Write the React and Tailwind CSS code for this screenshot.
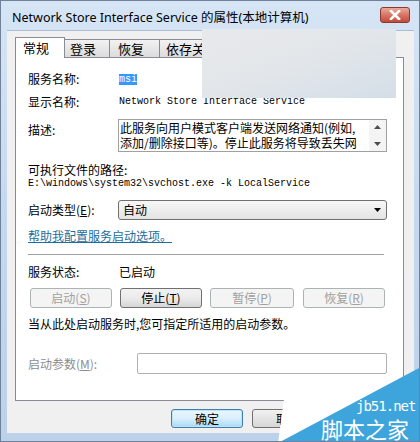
import React from "react";

const cjk = "font-['Noto_Sans_CJK_SC','Noto_Sans',sans-serif]";
const mono = "font-['Liberation_Mono',monospace]";

function Btn({ children, disabled, w = "w-[82px]" }) {
  return (
    <div
      className={`${w} h-[20px] flex items-center justify-center rounded-[3px] border text-[12px] leading-[16px] ${
        disabled
          ? "border-[#adb2b5] bg-[#f4f4f4] text-[#a0a0a0]"
          : "border-[#707070] bg-gradient-to-b from-[#f2f2f2] via-[#ebebeb] to-[#d6d6d6] text-black"
      }`}
    >
      {children}
    </div>
  );
}

export default function App() {
  return (
    <div
      className={`relative w-[420px] h-[442px] overflow-hidden flex flex-col bg-gradient-to-b from-[#d6e5f5] via-[#c4d8ee] to-[#bcd2ea] border border-[#6f8299] ${cjk}`}
    >
      {/* title bar */}
      <div className="h-[29px] shrink-0 flex items-center pl-[11px] pr-[9px]">
        <div className="text-[12.5px] leading-[16px] text-black pt-[4px] font-['Noto_Sans','Noto_Sans_CJK_SC',sans-serif]">
          Network Store Interface Service 的属性(本地计算机)
        </div>
        <div className="ml-auto mt-[-2px] w-[30px] h-[16px] rounded-[3px] border border-[#8b3a32] bg-gradient-to-b from-[#e9a99c] via-[#d77565] to-[#c2493a] flex items-center justify-center">
          <svg width="12" height="10" viewBox="0 0 12 10">
            <path d="M2 1 L10 9 M10 1 L2 9" stroke="#fff" strokeWidth="2.6" strokeLinecap="square" />
          </svg>
        </div>
      </div>

      {/* dialog body */}
      <div className="flex-1 ml-[6px] mr-[5px] mb-[8px] bg-[#f0f0f0] flex flex-col border-t border-[#a8bcd4]">
        {/* tabs */}
        <div className="h-[26px] flex items-end pl-[8px] shrink-0">
          <div className="w-[50px] h-[21px] bg-white border border-b-0 border-[#898c95] text-[13px] leading-[16px] pl-[7px] pt-[2px] relative z-10 mb-[-1px]">
            常规
          </div>
          <div className="w-[45px] h-[18px] bg-gradient-to-b from-[#f2f2f2] to-[#dcdcdc] border border-l-0 border-b-0 border-[#898c95] text-[13px] leading-[16px] pl-[5px] pt-[1px]">
            登录
          </div>
          <div className="w-[50px] h-[18px] bg-gradient-to-b from-[#f2f2f2] to-[#dcdcdc] border border-l-0 border-b-0 border-[#898c95] text-[13px] leading-[16px] pl-[8px] pt-[1px]">
            恢复
          </div>
          <div className="w-[50px] h-[18px] bg-gradient-to-b from-[#f2f2f2] to-[#dcdcdc] border border-l-0 border-b-0 border-[#898c95] text-[13px] leading-[16px] pl-[6px] pt-[1px]">
            依存关系
          </div>
        </div>

        {/* panel */}
        <div className="ml-[8px] mr-[10px] h-[344px] bg-white border border-[#898c95] flex flex-col pl-[12px] pr-[16px] text-[12px] leading-[16px] text-black">
          <div className="mt-[13px] h-[16px] flex items-center">
            <div className="w-[91px]">服务名称:</div>
            <span className={`${mono} text-[10px] leading-[11px] bg-[#3399ff] text-white`}>msi</span>
          </div>
          <div className="mt-[7px] h-[16px] flex items-center">
            <div className="w-[91px]">显示名称:</div>
            <span className={`${mono} text-[10px]`}>Network Store Interface Service</span>
          </div>
          <div className="mt-[9px] flex">
            <div className="w-[90px] pt-[3px]">描述:</div>
            <div className="flex-1 h-[33px] border border-[#a0a0a0] flex">
              <div className="flex-1 pl-[1px] text-[12px] leading-[14px] overflow-hidden whitespace-nowrap flex flex-col">
                <div className="h-[15px] leading-[15px]">此服务向用户模式客户端发送网络通知(例如,</div>
                <div className="h-[15px] leading-[15px]">添加/删除接口等)。停止此服务将导致丢失网</div>
              </div>
              <div className="w-[17px] bg-[#f4f4f4] flex flex-col items-center justify-between py-[5px]">
                <svg width="7" height="4" viewBox="0 0 7 4"><path d="M0 4 L3.5 0 L7 4 Z" fill="#4d4d4d" /></svg>
                <svg width="7" height="4" viewBox="0 0 7 4"><path d="M0 0 L3.5 4 L7 0 Z" fill="#4d4d4d" /></svg>
              </div>
            </div>
          </div>
          <div className="mt-[11px] h-[14px] flex items-center">可执行文件的路径:</div>
          <div className={`h-[14px] flex items-center ${mono} text-[10px]`}>
            E:\windows\system32\svchost.exe -k LocalService
          </div>
          <div className="mt-[9px] flex items-center">
            <div className="w-[90px]">启动类型(<u>E</u>):</div>
            <div className="flex-1 h-[20px] rounded-[3px] border border-[#707070] bg-gradient-to-b from-[#f7f7f7] to-[#e3e3e3] flex items-center pl-[4px] pr-[5px]">
              <span>自动</span>
              <svg className="ml-auto" width="7" height="4" viewBox="0 0 7 4"><path d="M0 0 L3.5 4 L7 0 Z" fill="#000" /></svg>
            </div>
          </div>
          <div className="mt-[8px] h-[16px] flex items-center">
            <span className="text-[#1f6d9c] underline">帮助我配置服务启动选项。</span>
          </div>
          <div className="mt-[10px] h-px bg-[#a0a0a0] mr-[3px]" />
          <div className="mt-[9px] h-[16px] flex items-center">
            <div className="w-[91px]">服务状态:</div>
            <span>已启动</span>
          </div>
          <div className="mt-[8px] flex items-center gap-[8px] pl-[2px]">
            <Btn disabled>启动(<u>S</u>)</Btn>
            <Btn>停止(<u>T</u>)</Btn>
            <Btn disabled w="w-[84px]">暂停(<u>P</u>)</Btn>
            <div className="ml-[1px]"><Btn disabled>恢复(<u>R</u>)</Btn></div>
          </div>
          <div className="mt-[8px] h-[16px] flex items-center">当从此处启动服务时,您可指定所适用的启动参数。</div>
          <div className="mt-[21px] flex items-center">
            <div className="w-[109px] text-[#8d8d8d]">启动参数(<u>M</u>):</div>
            <div className="flex-1 h-[21px] border border-[#b0b0b0] rounded-[2px] bg-white" />
          </div>
        </div>

        {/* bottom buttons */}
        <div className="flex gap-[9px] pl-[164px] mt-[8px]">
          <div className="w-[72px] h-[19px] rounded-[3px] border border-[#3c7fb1] bg-gradient-to-b from-[#eaf6fd] via-[#d9f0fc] to-[#a7d9f5] shadow-[inset_0_0_0_1px_#bfe2f7] flex items-center justify-center text-[12px] leading-[16px]">
            确定
          </div>
          <div className="w-[72px] h-[19px] rounded-[3px] border border-[#707070] bg-gradient-to-b from-[#f2f2f2] to-[#d6d6d6] flex items-center justify-center text-[12px] leading-[16px]">
            取消
          </div>
        </div>
      </div>

      {/* obscuring patch */}
      <div className="absolute left-[201px] top-[28px] w-[194px] h-[69px] bg-gradient-to-br from-[#e8e9eb] via-[#e2e6ea] to-[#d4dee8]" />

      {/* watermark */}
      <svg className="absolute left-0 top-0" width="420" height="442" viewBox="0 0 420 442">
        <polygon points="283,398 420,381 420,442 277,442" fill="#ffffff" />
        <polygon points="420,366 420,442 277,442" fill="#3ea5dc" />
      </svg>
      <div className="absolute left-[355px] top-[399px] text-[14px] leading-[13px] text-white font-['DejaVu_Sans_Mono',monospace] tracking-[-1px]">
        jb51.net
      </div>
      <div className="absolute left-[320px] top-[414px] text-[22px] leading-[26px] text-white font-['Noto_Sans_CJK_SC',sans-serif]">
        脚本之家
      </div>
    </div>
  );
}
